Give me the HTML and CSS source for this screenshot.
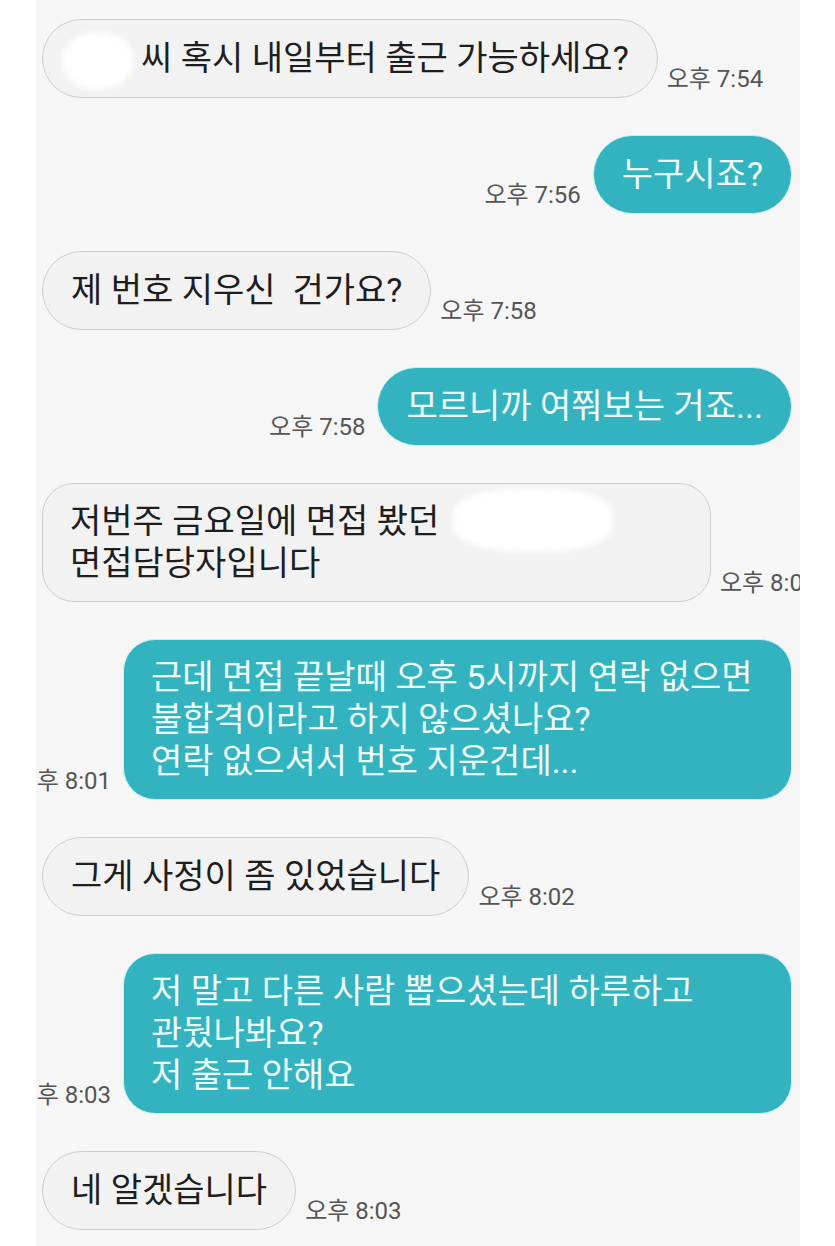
FILE: index.html
```html
<!DOCTYPE html>
<html lang="ko">

<head>
    <meta charset="UTF-8">
    <meta name="viewport" content="width=device-width, initial-scale=1.0">
    <title>대화</title>
    <link rel="stylesheet" href="styles.css">
</head>

<body>
    <div class="screen">
        <div class="row in">
            <div class="bubble"><span class="blot blot-name"></span>씨 혹시 내일부터 출근 가능하세요?</div>
            <span class="time">오후 7:54</span>
        </div>
        <div class="row out">
            <span class="time">오후 7:56</span>
            <div class="bubble">누구시죠?</div>
        </div>
        <div class="row in">
            <div class="bubble">제 번호 지우신&nbsp; 건가요?</div>
            <span class="time">오후 7:58</span>
        </div>
        <div class="row out">
            <span class="time">오후 7:58</span>
            <div class="bubble">모르니까 여쭤보는 거죠...</div>
        </div>
        <div class="row in">
            <div class="bubble multi">저번주 금요일에 면접 봤던<span class="blot blot-company"></span><br>면접담당자입니다</div>
            <span class="time">오후 8:01</span>
        </div>
        <div class="row out">
            <span class="time">오후 8:01</span>
            <div class="bubble multi">근데 면접 끝날때 오후 5시까지 연락 없으면<br>불합격이라고 하지 않으셨나요?<br>연락 없으셔서 번호 지운건데...</div>
        </div>
        <div class="row in">
            <div class="bubble">그게 사정이 좀 있었습니다</div>
            <span class="time">오후 8:02</span>
        </div>
        <div class="row out">
            <span class="time">오후 8:03</span>
            <div class="bubble multi">저 말고 다른 사람 뽑으셨는데 하루하고<br>관뒀나봐요?<br>저 출근 안해요</div>
        </div>
        <div class="row in">
            <div class="bubble">네 알겠습니다</div>
            <span class="time">오후 8:03</span>
        </div>
    </div>
</body>

</html>
```

FILE: styles.css
```css
body {
    margin: 0;
    background: #fff;
    font-family: Roboto, "Noto Sans CJK KR", sans-serif;
}

.screen {
    margin-left: 36px;
    width: 764px;
    height: 1246px;
    box-sizing: border-box;
    padding: 19px 8px 0 6px;
    background: #f6f6f6;
    overflow: hidden;
    display: flex;
    flex-direction: column;
    gap: 37px;
}

.row {
    display: flex;
    align-items: flex-end;
    gap: 9px;
}

.row.out {
    justify-content: flex-end;
    gap: 12px;
}

.bubble {
    flex-shrink: 0;
    white-space: nowrap;
    padding: 17px 28px 18px;
    border-radius: 40px;
    font-size: 34px;
    line-height: 42px;
}

/* 여러 줄 말풍선은 최대 너비로 고정 */
.bubble.multi {
    box-sizing: border-box;
    width: 669px;
    padding: 16px 27px 17px;
    border-radius: 32px;
}

.in .bubble {
    background: #f2f2f2;
    border: 1.5px solid #cdcdcd;
    color: #1e1e1e;
}

.out .bubble {
    background: #33b3bf;
    border: 1.5px solid #c4f1f4;
    color: #eefbfb;
}

.time {
    flex-shrink: 0;
    margin-bottom: 6px;
    font-size: 24px;
    line-height: 26px;
    color: #555;
    white-space: nowrap;
}

.blot {
    display: inline-block;
    background: #fff;
    filter: blur(3px);
    vertical-align: middle;
}

.blot-name {
    width: 70px;
    height: 56px;
    margin: -10px 8px -10px -8px;
    border-radius: 45%;
}

.blot-company {
    width: 160px;
    height: 62px;
    margin: -18px 0 -10px 14px;
    border-radius: 40%;
}
```
